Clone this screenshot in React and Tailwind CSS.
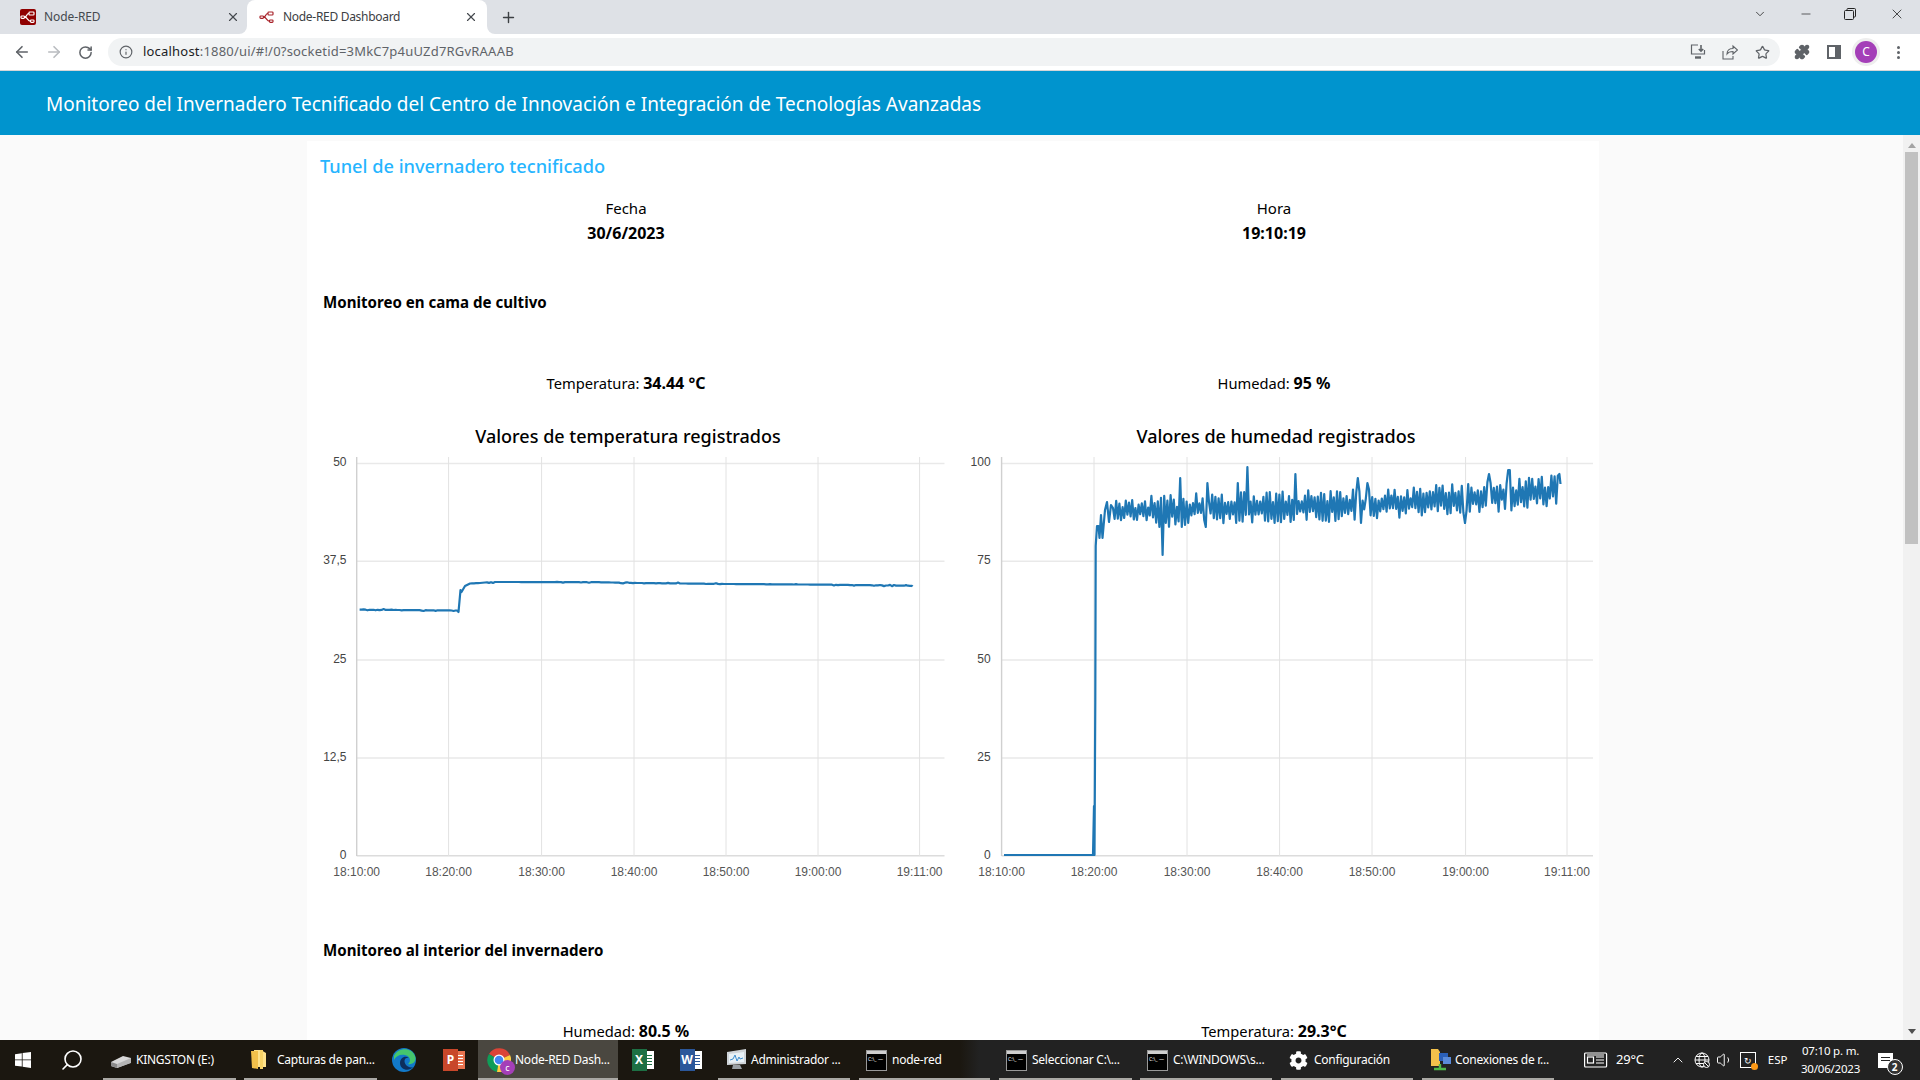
import { ArrowLeft, ArrowRight, RotateCw, Info, Star, Puzzle, X, Plus, ChevronDown, Minus, Search, ChevronUp, Volume1 } from 'lucide-react';
import { FaCog } from 'react-icons/fa';

// Small seeded generator so the noisy lines stay the same on every render
const makeRandom = (seed) => {
  let s = seed;
  return () => {
    s = (s * 16807) % 2147483647;
    return s / 2147483647;
  };
};

const buildTemperature = () => {
  const knots = [
    [359.6, 609.7], [457, 610.5], [458.5, 612], [460.5, 590], [461.5, 592], [465, 586], [470, 583.5],
    [480, 583], [485, 582.5], [495, 582], [597, 582.2], [638, 583], [728, 584], [830, 584.7], [912, 585.8],
  ];
  const rnd = makeRandom(4242);
  const pts = [];
  knots.forEach((k, i) => {
    pts.push(k);
    const next = knots[i + 1];
    if (!next || next[0] - k[0] < 8) return;
    for (let x = k[0] + 2; x < next[0]; x += 2) {
      const t = (x - k[0]) / (next[0] - k[0]);
      const y = k[1] + (next[1] - k[1]) * t;
      pts.push([x, y + (rnd() > 0.82 ? rnd() * 1.6 - 0.8 : 0)]);
    }
  });
  pts.push([912.5, 586.5]);
  return pts.map((p) => `${p[0].toFixed(1)},${p[1].toFixed(1)}`).join(' ');
};

const buildHumidity = () => {
  // spikes picked off the reference, in px
  const spikes = {
    1180: 478, 1207: 483, 1238: 483, 1247: 467, 1296: 474, 1358: 478, 1367: 483, 1489: 474, 1509: 470, 1559: 474,
    1162: 555, 1206: 527, 1274: 523, 1361: 523, 1465: 523, 1112: 530,
  };
  const rnd = makeRandom(917);
  const pts = [
    [1004, 855], [1093, 855], [1094, 806], [1094.5, 855], [1095.3, 700], [1095.7, 546], [1097, 526], [1098.5, 526],
    [1099.5, 538], [1101, 515], [1102.5, 538], [1105, 510], [1107, 502], [1109, 522], [1111, 505],
  ];
  const baseAt = (x) => {
    if (x < 1190) return 511;
    if (x < 1380) return 508 - ((x - 1190) / 190) * 3;
    return 505 - ((x - 1380) / 180) * 14;
  };
  let up = true;
  for (let x = 1113; x < 1560; x += 1.6) {
    const near = Object.keys(spikes).find((k) => Math.abs(k - x) < 0.85);
    if (near) {
      pts.push([x, spikes[near]]);
    } else {
      const amp = x < 1150 ? 11 : 16;
      const y = baseAt(x) + (up ? -1 : 1) * (0.25 + rnd() * 0.75) * amp;
      pts.push([x, y]);
    }
    up = !up;
  }
  pts.push([1560.5, 484]);
  return pts.map((p) => `${p[0].toFixed(1)},${p[1].toFixed(1)}`).join(' ');
};

const temperatureLine = buildTemperature();
const humidityLine = buildHumidity();

const Y_LINES = [463.5, 561.3, 660, 758, 855.7];
const TIMES = ['18:10:00', '18:20:00', '18:30:00', '18:40:00', '18:50:00', '19:00:00', '19:11:00'];

const Chart = ({ origin, xs, end, labels, labelX, line }) => (
  <svg width="640" height="436" viewBox={`${origin} 450 640 436`} className="block">
    {Y_LINES.map((y) => (
      <line key={y} x1={xs[0]} x2={end} y1={y} y2={y} stroke={y === 855.7 ? '#dcdcdc' : '#e9e9e9'} strokeWidth="1.4" />
    ))}
    {xs.map((x, i) => (
      <line key={x} x1={x} x2={x} y1="457" y2="856" stroke={i === 0 ? '#d0d0d0' : '#e2e2e2'} strokeWidth={i === 0 ? 1.4 : 1} />
    ))}
    {labels.map((l, i) => (
      <text key={l} x={labelX} y={i === 0 ? 466 : Y_LINES[i] + 3} textAnchor="end" fontSize="12" fill="#444" fontFamily="Liberation Sans">
        {l}
      </text>
    ))}
    {TIMES.map((t, i) => (
      <text key={t} x={xs[i]} y="875.5" textAnchor="middle" fontSize="12" fill="#555" fontFamily="Liberation Sans">
        {t}
      </text>
    ))}
    <polyline points={line} fill="none" stroke="#1f77b4" strokeWidth="2.2" strokeLinejoin="round" />
  </svg>
);

const NodeRedWires = ({ color = '#fff' }) => (
  <g fill="none" stroke={color} strokeWidth="1.2">
    <rect x="9" y="3" width="5" height="3" rx="0.8" />
    <rect x="1" y="7" width="3.5" height="2.4" rx="0.8" />
    <rect x="10.5" y="11" width="3.5" height="2.4" rx="0.8" />
    <path d="M9 4.5C6 4.5 7.5 8.2 4.5 8.2M4.500 8.2C8 8.2 7.5 12.2 10.5 12.2" />
  </g>
);

const WindowsLogo = () => (
  <svg width="16" height="16" viewBox="0 0 16 16" fill="#fff">
    <path d="M0 2.2 6.8 1.2V7.4H0ZM7.6 1.1 16 0V7.4H7.6ZM0 8.2H6.8V14.6L0 13.7ZM7.6 8.2H16V16L7.6 14.8Z" />
  </svg>
);

const DriveIcon = () => (
  <svg width="22" height="18" viewBox="0 0 22 18">
    <path d="M1 11 13 5l8 2-1 5-13 5-6-2Z" fill="#d8d8d8" />
    <path d="M1 11l6 2v4l-6-2Z" fill="#8a8a8a" />
    <path d="M7 13l14-6v5L7 17Z" fill="#b4b4b4" />
  </svg>
);

const FolderIcon = () => (
  <svg width="16" height="20" viewBox="0 0 16 20">
    <path d="M3 0h7l5 3v14H3Z" fill="#ffe28a" />
    <path d="M0 1h7v18l-6-1Z" fill="#f3c14b" />
    <path d="M9 0h3v19H9Z" fill="#f7d266" />
  </svg>
);

const EdgeIcon = () => (
  <svg width="24" height="24" viewBox="0 0 24 24">
    <circle cx="12" cy="12" r="12" fill="#1279c9" />
    <path d="M2 8C5 0 19-2 23 8c2 6-3 9-7 8 3-2 3-8-3-9C8 6 4 8 2 12Z" fill="#45c66d" />
    <path d="M8 15c0-5 5-8 9-5-4-1-6 3-3 7 2 2 5 3 7 2-4 5-13 3-13-4Z" fill="#0d2f5c" />
  </svg>
);

const OfficeIcon = ({ letter, bg, accent, lines }) => (
  <div className="relative flex h-[22px] w-[22px] items-center">
    <div className={`absolute right-0 top-[2px] flex h-[18px] w-[12px] flex-col justify-center gap-[2px] px-[2px] ${accent}`}>
      {[0, 1, 2, 3].map((i) => (
        <div key={i} className={`h-[1px] ${lines}`} />
      ))}
    </div>
    <div className={`relative flex h-[22px] w-[15px] items-center justify-center text-[12px] font-bold leading-none text-white ${bg}`}>{letter}</div>
  </div>
);

const ChromeIcon = () => (
  <div className="relative -ml-[2px] h-[24px] w-[26px]">
    <svg width="24" height="24" viewBox="0 0 24 24">
      <path d="M12 12 2 6A12 12 0 0 1 23 7Z" fill="#db4437" />
      <path d="M12 12 2 6A12 12 0 0 0 10 24Z" fill="#0f9d58" />
      <path d="M12 12 23 7A12 12 0 0 1 10 24Z" fill="#ffcd40" />
      <circle cx="12" cy="12" r="5.5" fill="#fff" />
      <circle cx="12" cy="12" r="4.3" fill="#4285f4" />
    </svg>
    <div className="absolute bottom-[-3px] right-[-2px] flex h-[15px] w-[15px] items-center justify-center rounded-full bg-[#a43fb8] text-[9px] leading-none text-white">c</div>
  </div>
);

const AdminIcon = () => (
  <svg width="23" height="22" viewBox="0 0 23 22">
    <path d="M2 3 21 0v15L2 16Z" fill="#cfd4d8" />
    <path d="M4 5 19 3v10L4 14Z" fill="#e8f1f6" />
    <path d="M5 11l3-1 2-4 2 6 2-4 1 2 3-1" fill="none" stroke="#3f8fd0" strokeWidth="1" />
    <path d="M8 16h7l2 4H7Z" fill="#9aa0a5" />
  </svg>
);

const TerminalIcon = () => (
  <div className="h-[21px] w-[21px] border border-[#999] bg-black">
    <div className="h-[3px] bg-[#cfcfcf]" />
    <div className="mt-[2px] pl-[1px] text-[5px] leading-[6px] text-white">C:\_ —</div>
  </div>
);

const NetworkIcon = () => (
  <svg width="24" height="24" viewBox="0 0 24 24">
    <path d="M2 1h7l2 3v14H2Z" fill="#f3c14b" />
    <rect x="10" y="5" width="9" height="8" fill="#2a5fb8" />
    <rect x="14" y="9" width="8" height="7" fill="#5b8bd8" />
    <path d="M5 21h12M11 16v5" stroke="#4fb848" strokeWidth="2.4" />
  </svg>
);

const TaskItem = ({ className, icon, label, running = true, active = false }) => (
  <div className={`relative flex h-full shrink-0 items-center pl-[7px] ${active ? 'bg-[#4a4740]' : ''} ${className}`}>
    <div className="flex w-[26px] shrink-0 justify-start">{icon}</div>
    {label && <span className="whitespace-nowrap text-[12px] tracking-[-0.25px] text-white">{label}</span>}
    {running && <div className="absolute bottom-0 left-0 right-0 h-[2px] bg-[#aaa8a4]" />}
  </div>
);

const App = () => {
  return (
    <div className="flex h-screen flex-col overflow-hidden bg-[#fafafa] font-['Noto_Sans',sans-serif] text-black">
      {/* tab strip */}
      <div className="flex h-[34px] shrink-0 items-end bg-[#dee1e6] pl-[8px]">
        <div className="flex h-[34px] w-[239px] items-center pl-[12px] pr-[7px]">
          <svg width="16" height="16" viewBox="0 0 16 16">
            <rect width="16" height="16" rx="2" fill="#8f0000" />
            <NodeRedWires />
          </svg>
          <span className="ml-[8px] text-[12px] tracking-[-0.1px] text-[#45494e]">Node-RED</span>
          <X className="ml-auto h-[14px] w-[14px] text-[#45494e]" strokeWidth={2} />
        </div>
        <div className="relative flex h-[34px] w-[240px] items-center rounded-t-[8px] bg-white pl-[12px] pr-[9px]">
          <div className="absolute bottom-0 left-[-8px] h-[8px] w-[8px] bg-white" />
          <div className="absolute bottom-0 left-[-8px] h-[8px] w-[8px] rounded-br-[8px] bg-[#dee1e6]" />
          <div className="absolute bottom-0 right-[-8px] h-[8px] w-[8px] bg-white" />
          <div className="absolute bottom-0 right-[-8px] h-[8px] w-[8px] rounded-bl-[8px] bg-[#dee1e6]" />
          <svg width="16" height="16" viewBox="0 0 16 16">
            <NodeRedWires color="#a8232a" />
          </svg>
          <span className="ml-[8px] text-[12px] tracking-[-0.3px] text-[#3c4043]">Node-RED Dashboard</span>
          <X className="ml-auto h-[14px] w-[14px] text-[#45494e]" strokeWidth={2} />
        </div>
        <div className="flex h-[34px] w-[42px] items-center justify-center">
          <Plus className="h-[17px] w-[17px] text-[#3c4043]" strokeWidth={2} />
        </div>
        <div className="ml-auto flex h-[28px] items-center self-start">
          <ChevronDown className="mr-[32px] h-[14px] w-[14px] text-[#333]" strokeWidth={1.5} />
          <Minus className="mr-[31px] h-[14px] w-[14px] text-[#222]" strokeWidth={1.2} />
          <svg width="12" height="12" viewBox="0 0 12 12" fill="none" stroke="#222" strokeWidth="1" className="mr-[33px]">
            <rect x="0.5" y="2.5" width="9" height="9" rx="1" />
            <path d="M3 2.5V1.5a1 1 0 0 1 1-1h6.5a1 1 0 0 1 1 1V8a1 1 0 0 1-1 1H9.5" />
          </svg>
          <X className="mr-[15px] h-[16px] w-[16px] text-[#222]" strokeWidth={1.2} />
        </div>
      </div>

      {/* toolbar */}
      <div className="flex h-[37px] shrink-0 items-center border-b border-[#d4d6d8] bg-white">
        <div className="flex w-[108px] shrink-0 items-center pl-[13px]">
          <ArrowLeft className="h-[18px] w-[18px] text-[#5f6368]" strokeWidth={2.2} />
          <ArrowRight className="ml-[14px] h-[18px] w-[18px] text-[#b9bcc0]" strokeWidth={2.2} />
          <RotateCw className="ml-[15px] h-[15px] w-[15px] text-[#5f6368]" strokeWidth={2.4} />
        </div>
        <div className="flex h-[28px] w-[1672px] shrink-0 items-center rounded-full bg-[#f1f3f4] pl-[11px]">
          <Info className="h-[14px] w-[14px] text-[#5f6368]" strokeWidth={2} />
          <span className="ml-[10px] text-[13px] tracking-[0.2px] text-[#5f6368]">
            <span className="text-[#202124]">localhost</span>:1880/ui/#!/0?socketid=3MkC7p4uUZd7RGvRAAAB
          </span>
          <svg width="16" height="16" viewBox="0 0 16 16" fill="none" stroke="#5f6368" strokeWidth="1.2" className="ml-auto">
            <path d="M8 1H1.5v9h13V6" />
            <path d="M11 1v6M8.8 5l2.2 2.2L13.2 5" strokeWidth="1.6" />
            <path d="M5 13.5h6" strokeWidth="2.4" />
          </svg>
          <svg width="16" height="16" viewBox="0 0 16 16" fill="none" stroke="#5f6368" strokeWidth="1.1" className="ml-[16px]">
            <path d="M1 7v8h10v-3" />
            <path d="M5 10c0-4 3-5.500 6-5.500V2l4.500 4-4.500 4V7.500c-3 0-5 1-6 2.500Z" />
          </svg>
          <Star className="ml-[17px] mr-[10px] h-[15px] w-[15px] text-[#5f6368]" strokeWidth={2} />
        </div>
        <Puzzle className="ml-[14px] h-[16px] w-[16px] fill-[#5f6368] text-[#5f6368]" strokeWidth={2} />
        <div className="ml-[17px] flex h-[14px] w-[14px] justify-end border-2 border-[#5f6368] bg-white">
          <div className="h-full w-[4px] bg-[#5f6368]" />
        </div>
        <div className="ml-[11px] flex h-[28px] w-[28px] items-center justify-center rounded-full bg-[#eeeeee]">
          <div className="flex h-[22px] w-[22px] items-center justify-center rounded-full bg-[#a43fb8] text-[12px] text-white">C</div>
        </div>
        <div className="ml-[17px] flex flex-col gap-[2px]">
          <div className="h-[3px] w-[3px] rounded-full bg-[#5f6368]" />
          <div className="h-[3px] w-[3px] rounded-full bg-[#5f6368]" />
          <div className="h-[3px] w-[3px] rounded-full bg-[#5f6368]" />
        </div>
      </div>

      {/* dashboard header */}
      <div className="flex h-[64px] shrink-0 items-center bg-[#0094ce] pl-[46px] pr-[16px] pt-[3px]">
        <h1 className="text-[19px] font-normal text-white">
          Monitoreo del Invernadero Tecnificado del Centro de Innovación e Integración de Tecnologías Avanzadas
        </h1>
      </div>

      {/* scrolled page */}
      <div className="flex min-h-0 flex-1">
        <main className="min-w-0 flex-1 overflow-hidden">
          <div className="ml-[307px] mt-[6px] w-[1292px] bg-white">
            <h2 className="pl-[13px] pt-[10px] text-[18.2px] font-medium leading-[30px] text-[#26b5ff]">Tunel de invernadero tecnificado</h2>

            <div className="ml-[6px] mt-[15px] grid grid-cols-[626px_626px] gap-x-[22px] text-center text-[15px] leading-[25px]">
              <div>
                <div>Fecha</div>
                <div className="text-[16px] font-bold">30/6/2023</div>
              </div>
              <div>
                <div>Hora</div>
                <div className="text-[16px] font-bold">19:10:19</div>
              </div>
            </div>

            <h3 className="ml-[16px] mt-[44px] text-[15.1px] font-bold leading-[24px]">Monitoreo en cama de cultivo</h3>

            <div className="ml-[6px] mt-[57px] grid grid-cols-[626px_626px] gap-x-[22px] text-center text-[14.7px] leading-[24px]">
              <div>
                Temperatura: <b className="text-[16px]">34.44 °C</b>
              </div>
              <div>
                Humedad: <b className="text-[16px]">95 %</b>
              </div>
            </div>

            <div className="ml-[3px] mt-[26px] grid grid-cols-[640px_640px] gap-x-[8px]">
              <div>
                <div className="pr-[4px] pt-[1px] text-center text-[18px] font-medium leading-[28px]">Valores de temperatura registrados</div>
                <Chart
                  origin={310}
                  xs={[356.7, 448.6, 541.6, 634, 726, 818, 919.6]}
                  end={944.5}
                  labels={['50', '37,5', '25', '12,5', '0']}
                  labelX={346.5}
                  line={temperatureLine}
                />
              </div>
              <div>
                <div className="pr-[4px] pt-[1px] text-center text-[18px] font-medium leading-[28px]">Valores de humedad registrados</div>
                <Chart
                  origin={958}
                  xs={[1001.6, 1094, 1187, 1279.6, 1372, 1465.6, 1567]}
                  end={1593}
                  labels={['100', '75', '50', '25', '0']}
                  labelX={990.6}
                  line={humidityLine}
                />
              </div>
            </div>

            <h3 className="ml-[16px] mt-[52px] text-[15.1px] font-bold leading-[24px]">Monitoreo al interior del invernadero</h3>

            <div className="ml-[6px] mt-[57px] grid grid-cols-[626px_626px] gap-x-[22px] pb-[60px] text-center text-[14.7px] leading-[24px]">
              <div>
                Humedad: <b className="text-[16px]">80.5 %</b>
              </div>
              <div>
                Temperatura: <b className="text-[16px]">29.3°C</b>
              </div>
            </div>
          </div>
        </main>

        {/* scrollbar */}
        <div className="flex w-[17px] shrink-0 flex-col items-center bg-[#f1f1f1]">
          <div className="mt-[8px] h-0 w-0 border-x-[4px] border-b-[5px] border-x-transparent border-b-[#a3a3a3]" />
          <div className="mt-[4px] h-[392px] w-[13px] bg-[#c1c1c1]" />
          <div className="mb-[6px] mt-auto h-0 w-0 border-x-[4px] border-t-[5px] border-x-transparent border-t-[#505050]" />
        </div>
      </div>

      {/* windows taskbar */}
      <div className="flex h-[40px] shrink-0 items-center bg-[linear-gradient(90deg,#1b1710_0%,#1b1710_50%,#222222_51%)] text-white">
        <div className="flex h-full w-[46px] shrink-0 items-center justify-center">
          <WindowsLogo />
        </div>
        <div className="flex h-full w-[52px] shrink-0 items-center justify-center">
          <Search className="h-[24px] w-[24px] -scale-x-100 text-white" strokeWidth={1.6} />
        </div>
        <TaskItem className="ml-[5px] w-[133px]" icon={<DriveIcon />} label="KINGSTON (E:)" />
        <TaskItem className="ml-[8px] w-[133px]" icon={<FolderIcon />} label="Capturas de pan..." />
        <div className="flex h-full w-[53px] shrink-0 items-center justify-center">
          <EdgeIcon />
        </div>
        <div className="flex h-full w-[48px] shrink-0 items-center justify-center">
          <OfficeIcon letter="P" bg="bg-[#c8472a]" accent="bg-[#e8734f]" lines="bg-white" />
        </div>
        <TaskItem className="w-[140px] pl-[11px]" active icon={<ChromeIcon />} label="Node-RED Dash..." />
        <div className="flex h-full w-[49px] shrink-0 items-center justify-center">
          <OfficeIcon letter="X" bg="bg-[#1d7044]" accent="bg-white" lines="bg-[#1d7044]" />
        </div>
        <div className="flex h-full w-[47px] shrink-0 items-center justify-center">
          <OfficeIcon letter="W" bg="bg-[#2b579a]" accent="bg-white" lines="bg-[#2b579a]" />
        </div>
        <TaskItem className="ml-[4px] w-[132px]" icon={<AdminIcon />} label="Administrador ..." />
        <TaskItem className="ml-[9px] w-[131px]" icon={<TerminalIcon />} label="node-red" />
        <TaskItem className="ml-[9px] w-[133px]" icon={<TerminalIcon />} label="Seleccionar C:\..." />
        <TaskItem className="ml-[8px] w-[132px]" icon={<TerminalIcon />} label="C:\WINDOWS\s..." />
        <TaskItem className="ml-[9px] w-[132px]" icon={<FaCog className="ml-[1px] h-[19px] w-[19px] text-white" />} label="Configuración" />
        <TaskItem className="ml-[9px] w-[132px]" icon={<NetworkIcon />} label="Conexiones de r..." />

        {/* tray */}
        <svg width="24" height="16" viewBox="0 0 24 16" fill="none" stroke="#fff" strokeWidth="1.2" className="ml-[30px] shrink-0">
          <rect x="0.6" y="1" width="22" height="14" rx="1" />
          <rect x="3.500" y="5" width="6" height="6" />
          <path d="M12 5h8M12 8h8M12 11h8M3 3h17" />
        </svg>
        <span className="ml-[8px] text-[13px] tracking-[-0.2px]">29°C</span>
        <ChevronUp className="ml-[26px] h-[16px] w-[16px]" strokeWidth={1.4} />
        <svg width="16" height="16" viewBox="0 0 16 16" fill="none" stroke="#fff" strokeWidth="1" className="ml-[8px] shrink-0">
          <circle cx="8" cy="8" r="7" />
          <ellipse cx="8" cy="8" rx="3" ry="7" />
          <path d="M1 8h14M2 4.500h12M2 11.500h12" />
          <circle cx="12.500" cy="12.500" r="3" fill="#222" />
          <path d="M10.500 10.500l4 4" />
        </svg>
        <Volume1 className="ml-[6px] h-[18px] w-[18px]" strokeWidth={1.3} />
        <div className="relative ml-[6px] flex h-[16px] w-[16px] shrink-0 items-center justify-center border border-white text-[9px] leading-none">
          ↻
          <div className="absolute bottom-[-3px] right-[-3px] h-[7px] w-[7px] rounded-full bg-[#ff9a16]" />
        </div>
        <span className="ml-[12px] text-[11.5px]">ESP</span>
        <div className="ml-[12px] flex w-[62px] shrink-0 flex-col items-center text-[11.500px] leading-[18px] tracking-[-0.2px]">
          <span>07:10 p. m.</span>
          <span>30/06/2023</span>
        </div>
        <div className="relative ml-[16px] h-[15px] w-[15px] shrink-0 bg-white">
          <div className="absolute left-[3px] top-[4px] h-[1px] w-[9px] bg-[#222]" />
          <div className="absolute left-[3px] top-[7px] h-[1px] w-[9px] bg-[#222]" />
          <div className="absolute left-[9px] top-[6px] flex h-[16px] w-[16px] items-center justify-center rounded-full border border-white bg-[#333] text-[10px] font-bold leading-none">2</div>
        </div>
      </div>
    </div>
  );
};

export default App;
